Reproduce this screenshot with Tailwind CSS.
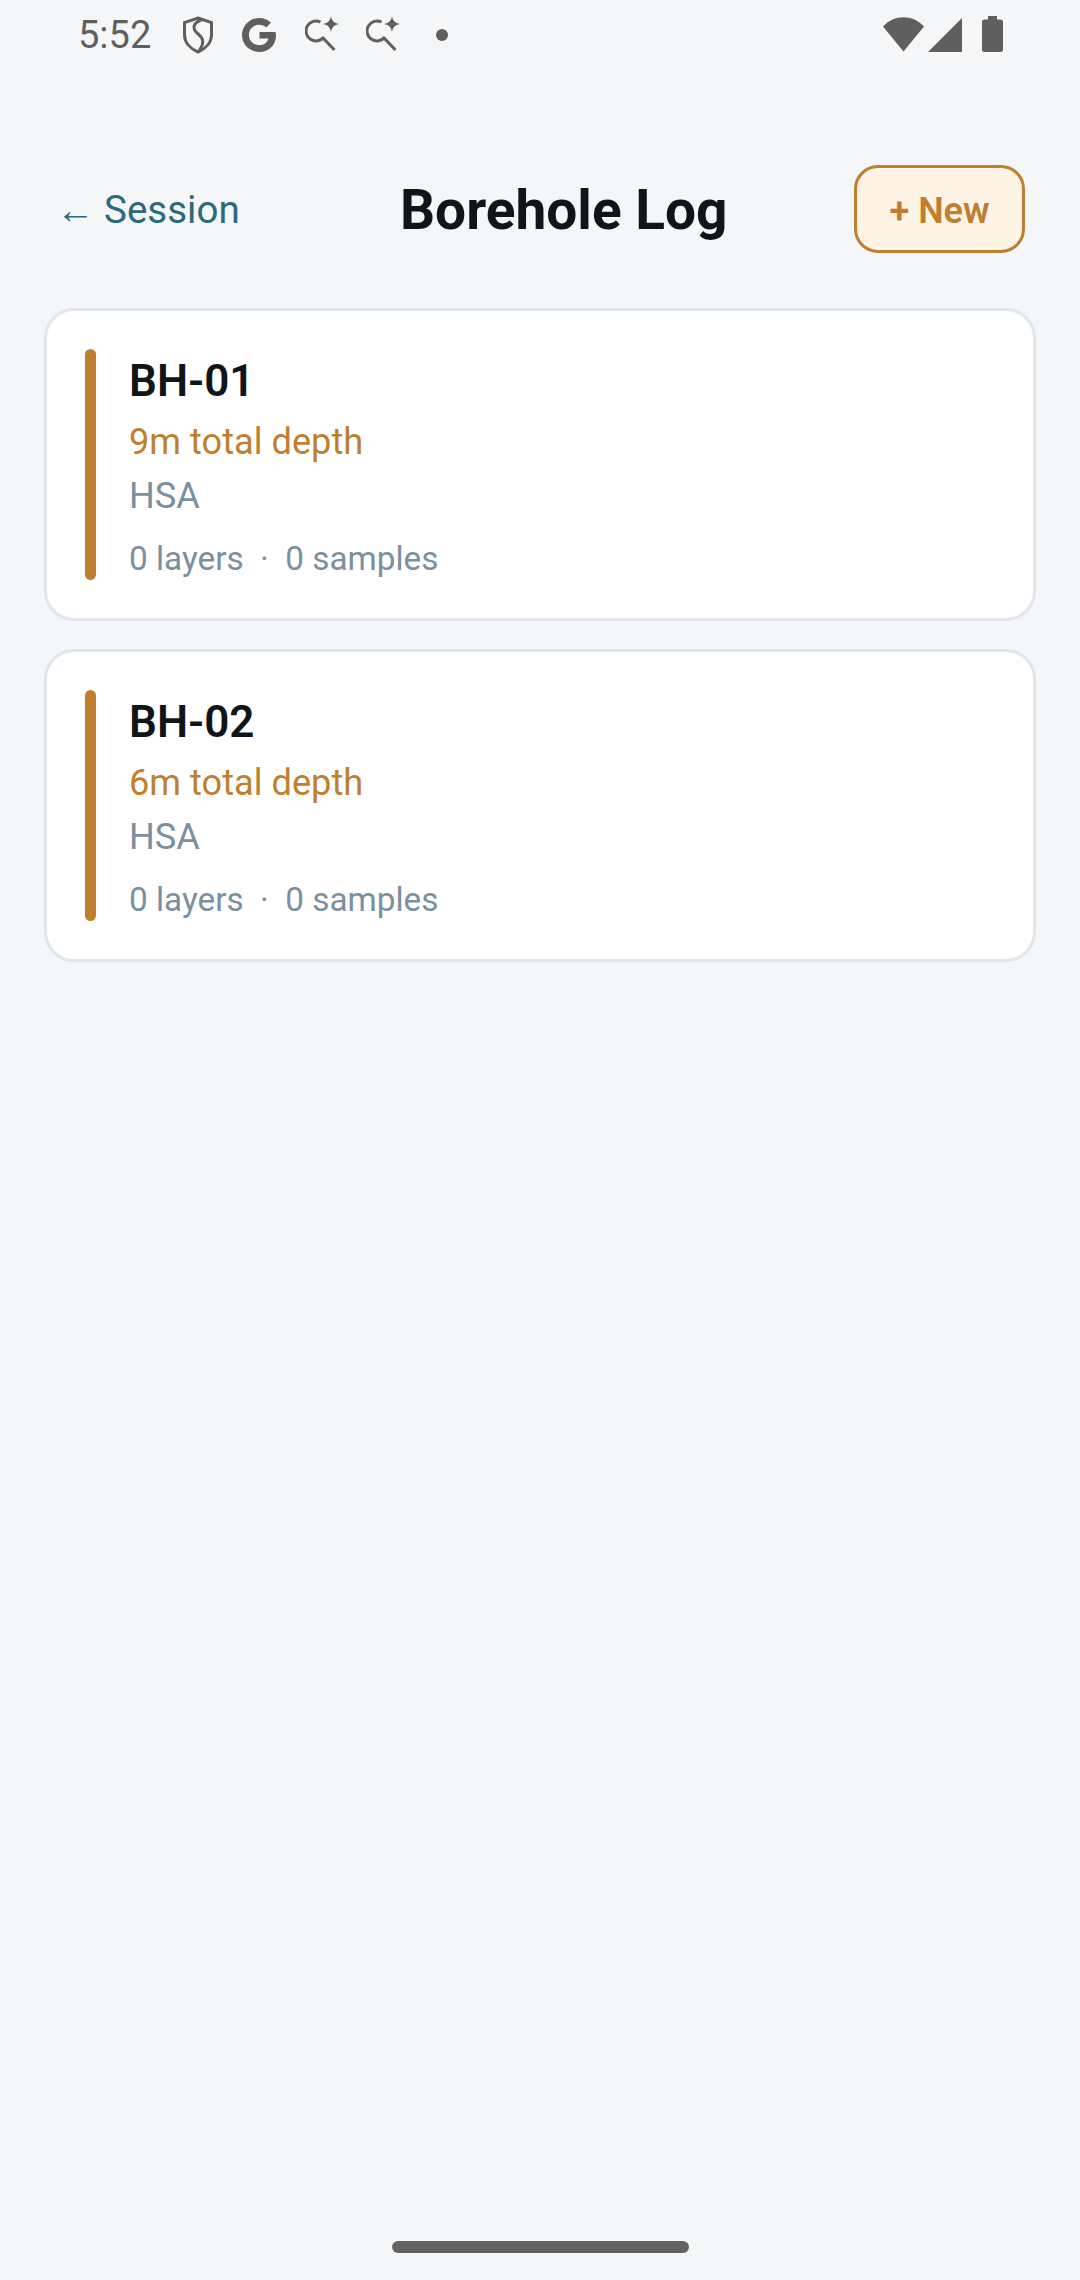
<!DOCTYPE html>
<html>
<head>
<meta charset="utf-8">
<script src="https://cdn.jsdelivr.net/npm/@tailwindcss/browser@4"></script>
</head>
<body class="m-0">
<div class="w-[1080px] h-[2280px] bg-[#f4f6f8] flex flex-col font-['Roboto',sans-serif] overflow-hidden">
  <!-- status bar -->
  <div class="h-[70px] shrink-0 flex items-start text-[#5f5f5f] relative">
    <span class="absolute left-[78px] top-[13px] text-[38px] leading-[44px]">5:52</span>
    <svg class="absolute left-[182px] top-[16px]" width="32" height="38" viewBox="0 0 32 38" fill="none" stroke="#5f5f5f" stroke-width="3"><path d="M16 2 L29.5 6.5 V19 C29.5 27 23 33 16 36 C9 33 2.500 27 2.500 19 V6.500 Z"/><path d="M20 3.500 C11 7 10 12 15 17 C20 21 24 25 17 35"/></svg>
    <svg class="absolute left-[242px] top-[18px]" width="34" height="34" viewBox="0 0 34 34" fill="none"><path d="M33.500 14 H17.500 V20.500 H26.500 C25 25 21.500 27.200 17.300 27.200 C11.500 27.200 6.900 22.800 6.900 17 C6.900 11.200 11.500 6.800 17.300 6.800 C20 6.800 22.300 7.700 24.200 9.500 L29 4.700 C25.900 1.800 21.900 0 17.300 0 C7.800 0 0 7.600 0 17 C0 26.400 7.800 34 17.300 34 C27 34 34 27.300 34 17.300 C34 16.200 33.800 15 33.500 14 Z" fill="#5f5f5f"/></svg>
    <svg class="absolute left-[305px] top-[16px]" width="35" height="36" viewBox="0 0 35 36" fill="none"><path d="M15.500 6 A10 10 0 1 0 19 21" stroke="#5f5f5f" stroke-width="3"/><path d="M18 22 L29.500 34" stroke="#5f5f5f" stroke-width="3"/><path d="M26 0 C26.500 4.500 29 7 34 8 C29 9 26.500 11.500 26 16.500 C25.500 11.500 23 9 18 8 C23 7 25.500 4.500 26 0 Z" fill="#5f5f5f"/></svg>
    <svg class="absolute left-[366px] top-[16px]" width="35" height="36" viewBox="0 0 35 36" fill="none"><path d="M15.500 6 A10 10 0 1 0 19 21" stroke="#5f5f5f" stroke-width="3"/><path d="M18 22 L29.500 34" stroke="#5f5f5f" stroke-width="3"/><path d="M26 0 C26.500 4.500 29 7 34 8 C29 9 26.500 11.500 26 16.500 C25.500 11.500 23 9 18 8 C23 7 25.500 4.500 26 0 Z" fill="#5f5f5f"/></svg>
    <div class="absolute left-[436px] top-[29px] w-3 h-3 rounded-full bg-[#5f5f5f]"></div>
    <svg class="absolute left-[883px] top-[17px]" width="41" height="35" viewBox="0 0 41 35"><path d="M0 9.500 C11 -3 30 -3 41 9.500 L20.500 34.500 Z" fill="#5f5f5f"/></svg>
    <svg class="absolute left-[928px] top-[18px]" width="34" height="34" viewBox="0 0 34 34"><path d="M34 0 V34 H0 Z" fill="#5f5f5f"/></svg>
    <svg class="absolute left-[982px] top-[16px]" width="21" height="36" viewBox="0 0 21 36"><path d="M6 0 H15 V3.500 H18.500 A2.500 2.500 0 0 1 21 6 V33.500 A2.500 2.500 0 0 1 18.500 36 H2.500 A2.500 2.500 0 0 1 0 33.500 V6 A2.500 2.500 0 0 1 2.500 3.500 H6 Z" fill="#5f5f5f"/></svg>
  </div>

  <!-- header -->
  <div class="mt-[95px] h-[88px] shrink-0 flex items-center pl-[56px] pr-[55px]">
    <div class="w-[344px] shrink-0 mt-[3px] text-[#2a6a7c] text-[38.5px] leading-none whitespace-nowrap">← Session</div>
    <div class="w-[327px] shrink-0 mt-[2px] text-center text-[#111518] text-[55px] font-bold leading-none whitespace-nowrap">Borehole Log</div>
    <button class="ml-auto w-[171px] h-[88px] pt-[3px] rounded-[24px] border-[3px] border-[#bf7f2f] bg-[#fdf4e6] text-[#bf7f2f] text-[36px] font-semibold leading-none">+ New</button>
  </div>

  <!-- list -->
  <div class="mt-[55px] mx-[44px] flex flex-col gap-[28.5px]">
    <div class="h-[312.5px] rounded-[30px] border-[3px] border-[#e0e6ec] bg-white flex items-stretch pl-[38px] py-[38px]">
      <div class="w-[11px] rounded-full bg-[#bf7f2f] shrink-0"></div>
      <div class="ml-[33px] flex flex-col">
        <div class="text-[44px] leading-[56px] font-semibold text-[#111518] mt-[4px]">BH-01</div>
        <div class="text-[36.2px] leading-[48px] mt-[9px] text-[#bf7f2f]">9m total depth</div>
        <div class="text-[36.2px] leading-[48px] mt-[6px] text-[#7a909e]">HSA</div>
        <div class="text-[33.3px] leading-[44px] mt-[17px] text-[#7a909e] whitespace-pre">0 layers  ·  0 samples</div>
      </div>
    </div>
    <div class="h-[313px] rounded-[30px] border-[3px] border-[#e0e6ec] bg-white flex items-stretch pl-[38px] py-[38px]">
      <div class="w-[11px] rounded-full bg-[#bf7f2f] shrink-0"></div>
      <div class="ml-[33px] flex flex-col">
        <div class="text-[44px] leading-[56px] font-semibold text-[#111518] mt-[4px]">BH-02</div>
        <div class="text-[36.2px] leading-[48px] mt-[9px] text-[#bf7f2f]">6m total depth</div>
        <div class="text-[36.2px] leading-[48px] mt-[6px] text-[#7a909e]">HSA</div>
        <div class="text-[33.3px] leading-[44px] mt-[17px] text-[#7a909e] whitespace-pre">0 layers  ·  0 samples</div>
      </div>
    </div>
  </div>

  <!-- home indicator -->
  <div class="mt-auto mb-[27px] mx-auto w-[297px] h-[12px] rounded-full bg-[#636363]"></div>
</div>
</body>
</html>
